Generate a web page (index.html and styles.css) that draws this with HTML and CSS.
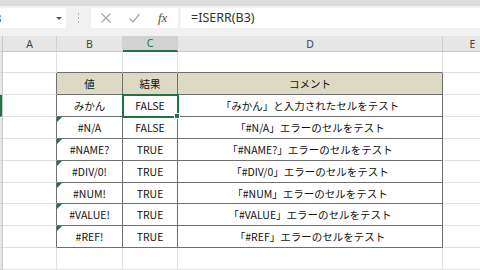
FILE: index.html
```html
<!DOCTYPE html>
<html lang="ja">
<head>
<meta charset="utf-8">
<link rel="stylesheet" href="styles.css">
</head>
<body>
<div class="band"></div>
<div class="toolbar">
  <div class="namebox"><span class="nametext">C3</span><span class="caret"></span></div>
  <div class="grip"><i></i><i></i><i></i></div>
  <div class="btns">
    <svg class="ico" width="12" height="12" viewBox="0 0 12 12"><path d="M1.5 1.5 L10.5 10.5 M10.5 1.5 L1.5 10.5" stroke="#a8a8a8" stroke-width="1.2" fill="none"/></svg>
    <svg class="ico" width="13" height="12" viewBox="0 0 13 12"><path d="M1.5 6.5 L5 10 L11.5 2" stroke="#a8a8a8" stroke-width="1.2" fill="none"/></svg>
    <span class="fx">fx</span>
  </div>
  <div class="formula">=ISERR(B3)</div>
</div>
<div class="sheet">
  <div class="c rh hdr"></div><div class="c ch">A</div><div class="c ch">B</div><div class="c ch sel">C</div><div class="c ch">D</div><div class="c ch">E</div>

  <div class="c rh"></div><div class="c"></div><div class="c tb"></div><div class="c tb"></div><div class="c tb"></div><div class="c"></div>

  <div class="c rh"></div><div class="c tl"></div><div class="c t th">値</div><div class="c t th">結果</div><div class="c t th">コメント</div><div class="c"></div>

  <div class="c rh act"></div><div class="c tl"></div><div class="c t">みかん</div><div class="c t cur">FALSE</div><div class="c t">「みかん」と入力されたセルをテスト</div><div class="c"></div>

  <div class="c rh"></div><div class="c tl"></div><div class="c t err">#N/A</div><div class="c t">FALSE</div><div class="c t">「#N/A」エラーのセルをテスト</div><div class="c"></div>

  <div class="c rh"></div><div class="c tl"></div><div class="c t err">#NAME?</div><div class="c t">TRUE</div><div class="c t">「#NAME?」エラーのセルをテスト</div><div class="c"></div>

  <div class="c rh"></div><div class="c tl"></div><div class="c t err">#DIV/0!</div><div class="c t">TRUE</div><div class="c t">「#DIV/0」エラーのセルをテスト</div><div class="c"></div>

  <div class="c rh"></div><div class="c tl"></div><div class="c t err">#NUM!</div><div class="c t">TRUE</div><div class="c t">「#NUM」エラーのセルをテスト</div><div class="c"></div>

  <div class="c rh"></div><div class="c tl"></div><div class="c t err">#VALUE!</div><div class="c t">TRUE</div><div class="c t">「#VALUE」エラーのセルをテスト</div><div class="c"></div>

  <div class="c rh"></div><div class="c tl"></div><div class="c t err">#REF!</div><div class="c t">TRUE</div><div class="c t">「#REF」エラーのセルをテスト</div><div class="c"></div>

  <div class="c rh"></div><div class="c"></div><div class="c"></div><div class="c"></div><div class="c"></div><div class="c"></div>
</div>
</body>
</html>
```
FILE: styles.css
```css
* { box-sizing: border-box; }
html, body { margin: 0; padding: 0; }
body {
  width: 480px;
  height: 270px;
  overflow: hidden;
  background: #ffffff;
  font-family: "Noto Sans", "Noto Sans CJK JP", sans-serif;
}
.band { height: 6px; background: #dcdcdc; }
.toolbar {
  height: 30px;
  background: #f1f1f1;
  display: flex;
  align-items: flex-start;
  padding-top: 2px;
}
.namebox {
  width: 66px;
  height: 20px;
  background: #fff;
  display: flex;
  align-items: center;
  justify-content: space-between;
  padding-right: 4px;
  overflow: hidden;
}
.nametext { margin-left: -13px; font-size: 12px; color: #333; }
.caret {
  width: 0; height: 0;
  border-left: 3px solid transparent;
  border-right: 3px solid transparent;
  border-top: 3px solid #555;
}
.grip {
  width: 25px;
  height: 20px;
  display: flex;
  flex-direction: column;
  align-items: center;
  justify-content: center;
  gap: 2px;
}
.grip i { display: block; width: 1px; height: 2px; background: #b4b4b4; }
.btns {
  width: 87px;
  height: 20px;
  background: #fff;
  display: flex;
  align-items: center;
  padding-left: 9px;
  gap: 16px;
}
.fx {
  font-family: "Liberation Serif", serif;
  font-style: italic;
  font-size: 13px;
  color: #505050;
  margin-left: 1px;
}
.formula {
  margin-left: 3px;
  flex: 1;
  height: 20px;
  background: #fff;
  padding-left: 10px;
  font-size: 12.5px;
  line-height: 20px;
  color: #333;
}
.sheet {
  display: grid;
  grid-template-columns: 3px 54px 66px 55px 265px 60px;
  grid-template-rows: 16px 21px 22px 22px 22px 22px 22px 21px 22px 22px 22px;
  width: 503px;
}
.c {
  border-right: 1px solid #e1e1e1;
  border-bottom: 1px solid #e1e1e1;
  display: flex;
  align-items: center;
  justify-content: center;
  font-family: "Noto Sans CJK JP", sans-serif;
  font-size: 10.5px;
  color: #111;
  white-space: nowrap;
  position: relative;
}
.rh { background: #e6e6e6; border-right: 1px solid #c8c8c8; border-bottom: 1px solid #d4d4d4; }
.rh.act { border-left: 2px solid #217346; border-right-color: #c8c8c8; }
.ch {
  background: #e6e6e6;
  border-right: 1px solid #d0d0d0;
  border-bottom: 1px solid #c8c8c8;
  font-family: "Noto Sans", sans-serif;
  font-size: 10.5px;
  color: #444;
}
.ch.sel { background: #d2d2d2; color: #217346; border-bottom: 2px solid #217346; }
.tb { border-bottom-color: #6f6f6f; }
.tl { border-right-color: #6f6f6f; }
.t { border-right-color: #6f6f6f; border-bottom-color: #6f6f6f; }
.th { background: #ddd9c4; }
.cur { outline: 2px solid #217346; outline-offset: -1px; z-index: 1; }
.cur::after {
  content: "";
  position: absolute;
  right: -3px;
  bottom: -3px;
  width: 4px;
  height: 4px;
  background: #217346;
  border: 1px solid #fff;
}
.err::before {
  content: "";
  position: absolute;
  left: 0;
  top: 0;
  width: 0; height: 0;
  border-top: 5px solid #217346;
  border-right: 5px solid transparent;
}
```
